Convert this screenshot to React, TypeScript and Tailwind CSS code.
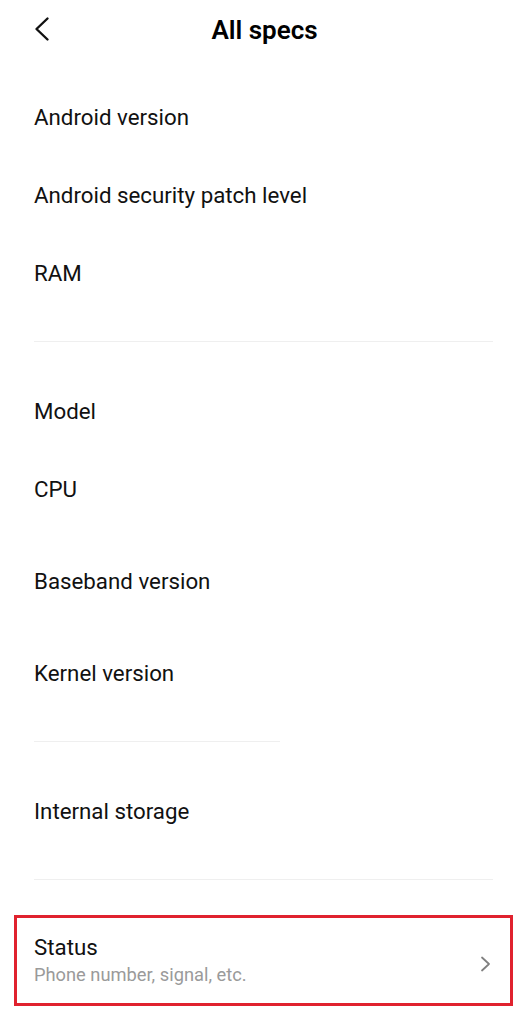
const font = { fontFamily: "Roboto, 'Noto Sans', sans-serif" };

function Row({ label, h = "h-[78px]" }: { label: string; h?: string }) {
    return (
        <div className={`flex items-center px-[34px] pt-[2px] text-[22.3px] text-[#111] ${h}`}>
            {label}
        </div>
    );
}

function Divider({ short }: { short?: boolean }) {
    return (
        <div className="px-[34px]">
            <div className={`h-px bg-[#efefef] ${short ? "w-[246px]" : "w-full"}`}></div>
        </div>
    );
}

export default function App() {
    return (
        <div className="w-[527px] h-[1024px] bg-white overflow-hidden" style={font}>
            {/* Header */}
            <div className="relative h-[60px] flex items-center justify-center">
                <svg className="absolute left-[30px] top-[13px]" width="24" height="32" viewBox="0 0 24 32" fill="none">
                    <path d="M17.5 5.5 L6.5 16 L17.5 26.5" stroke="#111" strokeWidth="2.4" strokeLinecap="round" strokeLinejoin="round" />
                </svg>
                <div className="text-[26px] font-semibold text-black pl-[2px]">All specs</div>
            </div>

            <div className="h-[18px]"></div>
            <Row label="Android version" />
            <Row label="Android security patch level" />
            <Row label="RAM" />
            <div className="h-[29px]"></div>
            <Divider />
            <div className="h-[30px]"></div>
            <Row label="Model" />
            <Row label="CPU" />
            <div className="h-[7px]"></div>
            <Row label="Baseband version" h="h-[92px]" />
            <Row label="Kernel version" h="h-[92px]" />
            <div className="h-[22px]"></div>
            <Divider short />
            <div className="h-[30px]"></div>
            <Row label="Internal storage" />
            <div className="h-[29px]"></div>
            <Divider />
            <div className="h-[35px]"></div>

            {/* Status row, highlighted */}
            <div className="mx-[14px] h-[91px] border-[3.5px] border-[#e0222e] flex items-center pl-[17px] pr-[18px]">
                <div className="flex-1 flex flex-col pt-[1px]">
                    <div className="text-[22.3px] leading-[28px] text-[#111]">Status</div>
                    <div className="text-[18.3px] leading-[28px] text-[#9a9a9a]">Phone number, signal, etc.</div>
                </div>
                <svg width="12" height="16" viewBox="0 0 12 16" fill="none" className="mt-[6px]">
                    <path d="M2 1.5 L9 8 L2 14.5" stroke="#808080" strokeWidth="1.8" strokeLinecap="round" strokeLinejoin="round" />
                </svg>
            </div>
        </div>
    );
}
